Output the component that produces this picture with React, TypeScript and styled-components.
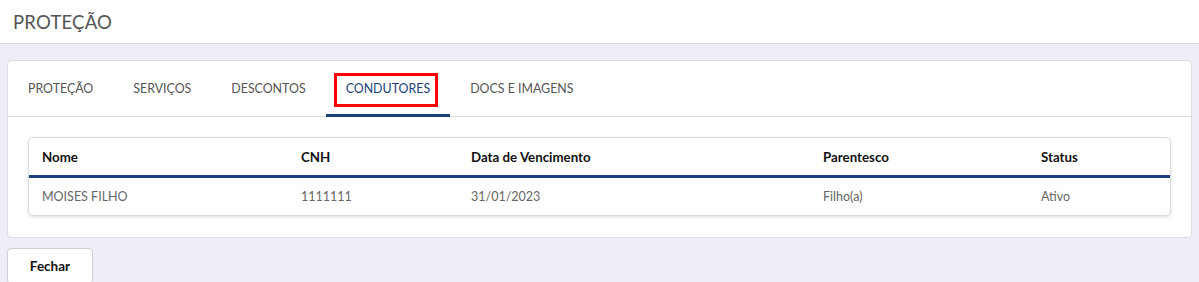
import React from "react";
import styled, { createGlobalStyle } from "styled-components";

const Global = createGlobalStyle`
  html, body { margin: 0; padding: 0; }
  body {
    background: #eeeef6;
    font-family: Lato, "Noto Sans", sans-serif;
  }
`;

const Header = styled.header`
  height: 43px;
  background: #fff;
  border-bottom: 1px solid #d6d6de;
  display: flex;
  align-items: center;
  padding-left: 13px;
`;

const Title = styled.h1`
  margin: 0;
  font-size: 18.5px;
  font-weight: 400;
  color: #555;
  letter-spacing: 0.2px;
`;

const Main = styled.main`
  padding: 16px 7px 0 7px;
  display: flex;
  flex-direction: column;
  align-items: flex-start;
  gap: 10px;
`;

const Card = styled.section`
  width: 1185px;
  box-sizing: border-box;
  background: #fff;
  border: 1px solid #dcdce2;
  border-radius: 4px;
`;

const Tabs = styled.nav`
  display: flex;
  height: 55px;
  border-bottom: 1px solid #dcdce2;
`;

const Tab = styled.div<{ $active?: boolean }>`
  position: relative;
  display: flex;
  align-items: center;
  padding: 2px 20px 0 20px;
  font-size: 12.4px;
  color: ${(p) => (p.$active ? "#1d3f7a" : "#555")};
  border-bottom: 3px solid ${(p) => (p.$active ? "#1d3f7a" : "transparent")};
  margin-bottom: -1px;
`;

const Highlight = styled.span`
  position: absolute;
  left: 8px;
  right: 12px;
  top: 12px;
  bottom: 7px;
  border: 3px solid #f00;
  pointer-events: none;
`;

const Body = styled.div`
  padding: 20px 20px 21px 20px;
`;

const Table = styled.div`
  border: 1px solid #dcdce2;
  border-radius: 5px;
  box-shadow: 0 1px 3px rgba(0, 0, 0, 0.14);
  overflow: hidden;
`;

const Row = styled.div<{ $head?: boolean }>`
  display: grid;
  grid-template-columns: 259px 170px 352px 218px 1fr;
  align-items: center;
  height: 37px;
  border-bottom: ${(p) => (p.$head ? "3px solid #1d3f7a" : "none")};
`;

const Cell = styled.div<{ $head?: boolean }>`
  padding-left: 13px;
  font-size: ${(p) => (p.$head ? "13.3px" : "12.5px")};
  font-weight: ${(p) => (p.$head ? 700 : 400)};
  color: ${(p) => (p.$head ? "#111" : "#666")};
`;

const Button = styled.button`
  width: 86px;
  height: 36px;
  background: #fff;
  border: 1px solid #cfcfd6;
  border-radius: 4px;
  font-family: Lato, "Noto Sans", sans-serif;
  font-size: 13.5px;
  font-weight: 700;
  color: #111;
`;

const tabs = ["PROTEÇÃO", "SERVIÇOS", "DESCONTOS", "CONDUTORES", "DOCS E IMAGENS"];
const head = ["Nome", "CNH", "Data de Vencimento", "Parentesco", "Status"];
const rows = [["MOISES FILHO", "1111111", "31/01/2023", "Filho(a)", "Ativo"]];

export default function App() {
  return (
    <>
      <Global />
      <Header>
        <Title>PROTEÇÃO</Title>
      </Header>
      <Main>
        <Card>
          <Tabs>
            {tabs.map((t) => (
              <Tab key={t} $active={t === "CONDUTORES"}>
                {t}
                {t === "CONDUTORES" && <Highlight />}
              </Tab>
            ))}
          </Tabs>
          <Body>
            <Table>
              <Row $head>
                {head.map((h) => (
                  <Cell key={h} $head>
                    {h}
                  </Cell>
                ))}
              </Row>
              {rows.map((r, i) => (
                <Row key={i}>
                  {r.map((c, j) => (
                    <Cell key={j}>{c}</Cell>
                  ))}
                </Row>
              ))}
            </Table>
          </Body>
        </Card>
        <Button>Fechar</Button>
      </Main>
    </>
  );
}
